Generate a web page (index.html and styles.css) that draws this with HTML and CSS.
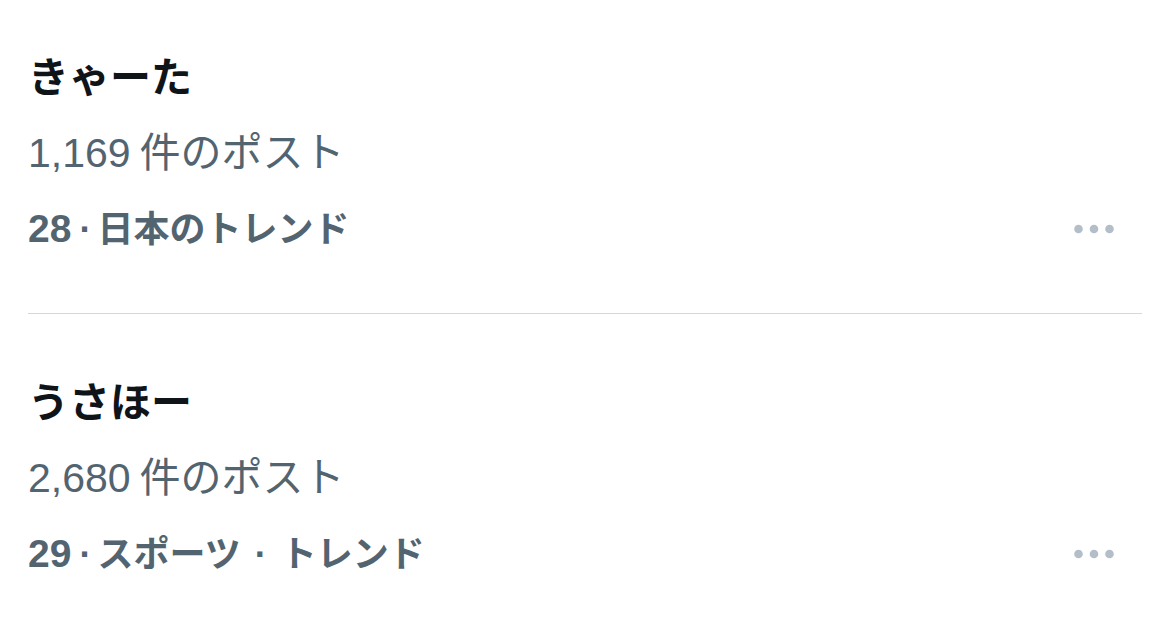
FILE: index.html
```html
<!DOCTYPE html>
<html lang="ja">
<head>
  <meta charset="UTF-8">
  <meta name="viewport" content="width=device-width, initial-scale=1.0">
  <title>トレンド</title>
  <link rel="stylesheet" href="styles.css">
</head>
<body>
  <div class="trends">
    <div class="trend">
      <div class="trend-name">きゃーた</div>
      <div class="trend-count">1,169<span class="gap"></span>件のポスト</div>
      <div class="trend-meta">
        <span><span class="rank">28</span><span class="sep">·</span>日本のトレンド</span>
        <svg class="more" width="40" height="10" viewBox="0 0 40 10">
          <circle cx="4.5" cy="5" r="4.3"/>
          <circle cx="20" cy="5" r="4.3"/>
          <circle cx="35.5" cy="5" r="4.3"/>
        </svg>
      </div>
    </div>
    <div class="trend">
      <div class="trend-name">うさほー</div>
      <div class="trend-count">2,680<span class="gap"></span>件のポスト</div>
      <div class="trend-meta">
        <span><span class="rank">29</span><span class="sep">·</span>スポーツ<span class="sep wide">·</span>トレンド</span>
        <svg class="more" width="40" height="10" viewBox="0 0 40 10">
          <circle cx="4.5" cy="5" r="4.3"/>
          <circle cx="20" cy="5" r="4.3"/>
          <circle cx="35.5" cy="5" r="4.3"/>
        </svg>
      </div>
    </div>
  </div>
</body>
</html>
```

FILE: styles.css
```css
body {
  margin: 0;
  background: #fff;
  font-family: "Liberation Sans", "Noto Sans CJK JP", sans-serif;
  color: #0f1419;
}
.trends {
  padding: 0 28px;
}
.trend {
  padding: 52px 0 46px;
  border-bottom: 1px solid #cfd9de;
}
.trend:first-child {
  padding-top: 41px;
}
.trend:last-child {
  border-bottom: none;
}
.trend-name {
  font-size: 41px;
  font-weight: bold;
  line-height: 75px;
}
.trend-count {
  font-size: 41px;
  line-height: 75px;
  color: #536471;
}
.gap {
  display: inline-block;
  width: 9px;
}
.trend-meta {
  display: flex;
  justify-content: space-between;
  align-items: center;
  font-size: 36px;
  font-weight: bold;
  line-height: 75px;
  color: #536471;
}
.rank {
  font-size: 39px;
}
.sep {
  margin: 0 6px 0 8px;
}
.sep.wide {
  margin: 0 14px;
}
.more {
  fill: #b4bec8;
  margin-right: 28px;
}
```
